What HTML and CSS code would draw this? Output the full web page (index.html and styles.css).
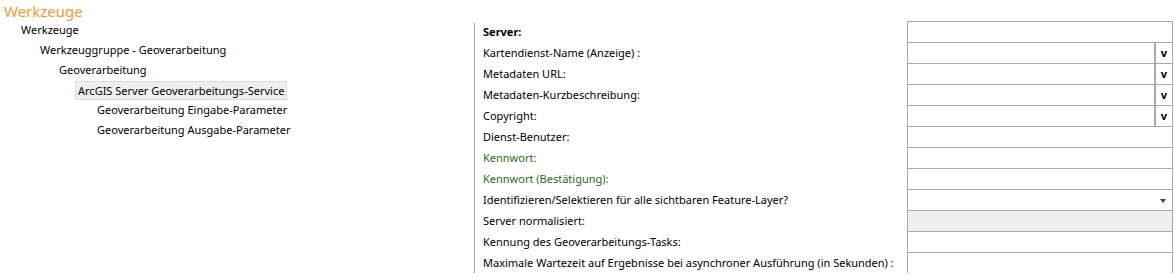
FILE: index.html
```html
<!DOCTYPE html>
<html lang="de">
<head>
    <meta charset="UTF-8">
    <title>Werkzeuge</title>
    <link rel="stylesheet" href="styles.css">
</head>
<body>
    <div class="page-title">Werkzeuge</div>

    <div class="main">
        <div class="tree">
            <div class="node lvl1">Werkzeuge</div>
            <div class="node lvl2">Werkzeuggruppe - Geoverarbeitung</div>
            <div class="node lvl3">Geoverarbeitung</div>
            <div class="node lvl4 selected">ArcGIS Server Geoverarbeitungs-Service</div>
            <div class="node lvl5">Geoverarbeitung Eingabe-Parameter</div>
            <div class="node lvl5">Geoverarbeitung Ausgabe-Parameter</div>
        </div>

        <div class="form">
            <div class="row">
                <label class="bold">Server:</label>
                <div class="field"></div>
            </div>
            <div class="row">
                <label>Kartendienst-Name (Anzeige) :</label>
                <div class="field lang"><span class="box"></span><span class="v">v</span></div>
            </div>
            <div class="row">
                <label>Metadaten URL:</label>
                <div class="field lang"><span class="box"></span><span class="v">v</span></div>
            </div>
            <div class="row">
                <label>Metadaten-Kurzbeschreibung:</label>
                <div class="field lang"><span class="box"></span><span class="v">v</span></div>
            </div>
            <div class="row">
                <label>Copyright:</label>
                <div class="field lang"><span class="box"></span><span class="v">v</span></div>
            </div>
            <div class="row">
                <label>Dienst-Benutzer:</label>
                <div class="field"></div>
            </div>
            <div class="row">
                <label class="green">Kennwort:</label>
                <div class="field"></div>
            </div>
            <div class="row">
                <label class="green">Kennwort (Bestätigung):</label>
                <div class="field"></div>
            </div>
            <div class="row">
                <label>Identifizieren/Selektieren für alle sichtbaren Feature-Layer?</label>
                <div class="field select"><span class="arrow"></span></div>
            </div>
            <div class="row">
                <label>Server normalisiert:</label>
                <div class="field disabled"></div>
            </div>
            <div class="row">
                <label>Kennung des Geoverarbeitungs-Tasks:</label>
                <div class="field"></div>
            </div>
            <div class="row">
                <label>Maximale Wartezeit auf Ergebnisse bei asynchroner Ausführung (in Sekunden) :</label>
                <div class="field"></div>
            </div>
        </div>
    </div>
</body>
</html>
```

FILE: styles.css
```css
body {
    margin: 0;
    background-color: #fff;
    font-family: "Noto Sans", "Open Sans", sans-serif;
    font-size: 11px;
    color: #000;
}

.page-title {
    height: 21px;
    line-height: 22px;
    padding-left: 4px;
    font-size: 15px;
    color: #f29b38;
}

.main {
    display: flex;
}

.tree {
    width: 474px;
    flex-shrink: 0;
    margin-top: -1px;
}

.node {
    height: 20px;
    line-height: 20px;
    padding: 0 3px;
    width: max-content;
}

.lvl1 { margin-left: 18px; }
.lvl2 { margin-left: 37px; }
.lvl3 { margin-left: 56px; }
.lvl4 { margin-left: 75px; }
.lvl5 { margin-left: 94px; }

.node.selected {
    height: 17px;
    line-height: 17px;
    margin-top: 1px;
    background-color: #efefef;
    border: 1px solid #dcdcdc;
    padding: 0 2px;
}

.form {
    flex: 1;
    border-left: 1px solid #a0a0a0;
    margin-top: 2px;
    padding-right: 2px;
}

.row {
    display: flex;
    height: 21px;
}

.row:first-child {
    margin-top: -2px;
}

.row label {
    flex: 1;
    min-width: 0;
    padding-left: 8px;
    line-height: 21px;
    white-space: nowrap;
}

.row label.bold {
    font-weight: bold;
}

.row label.green {
    color: #2b6b14;
}

.field {
    width: 266px;
    height: 22px;
    flex-shrink: 0;
    box-sizing: border-box;
    border: 1px solid #aaa;
    background: #fff;
    position: relative;
    z-index: 1;
}

.field.disabled {
    background-color: #efefef;
}

.field.lang {
    display: flex;
}

.field .box {
    flex: 1;
}

.field .v {
    width: 16px;
    border-left: 2px solid #aaa;
    text-align: center;
    font-weight: bold;
    font-size: 11px;
    line-height: 19px;
}

.field .arrow {
    position: absolute;
    right: 6px;
    top: 9px;
    border-left: 3px solid transparent;
    border-right: 3px solid transparent;
    border-top: 4px solid #444;
}
```
